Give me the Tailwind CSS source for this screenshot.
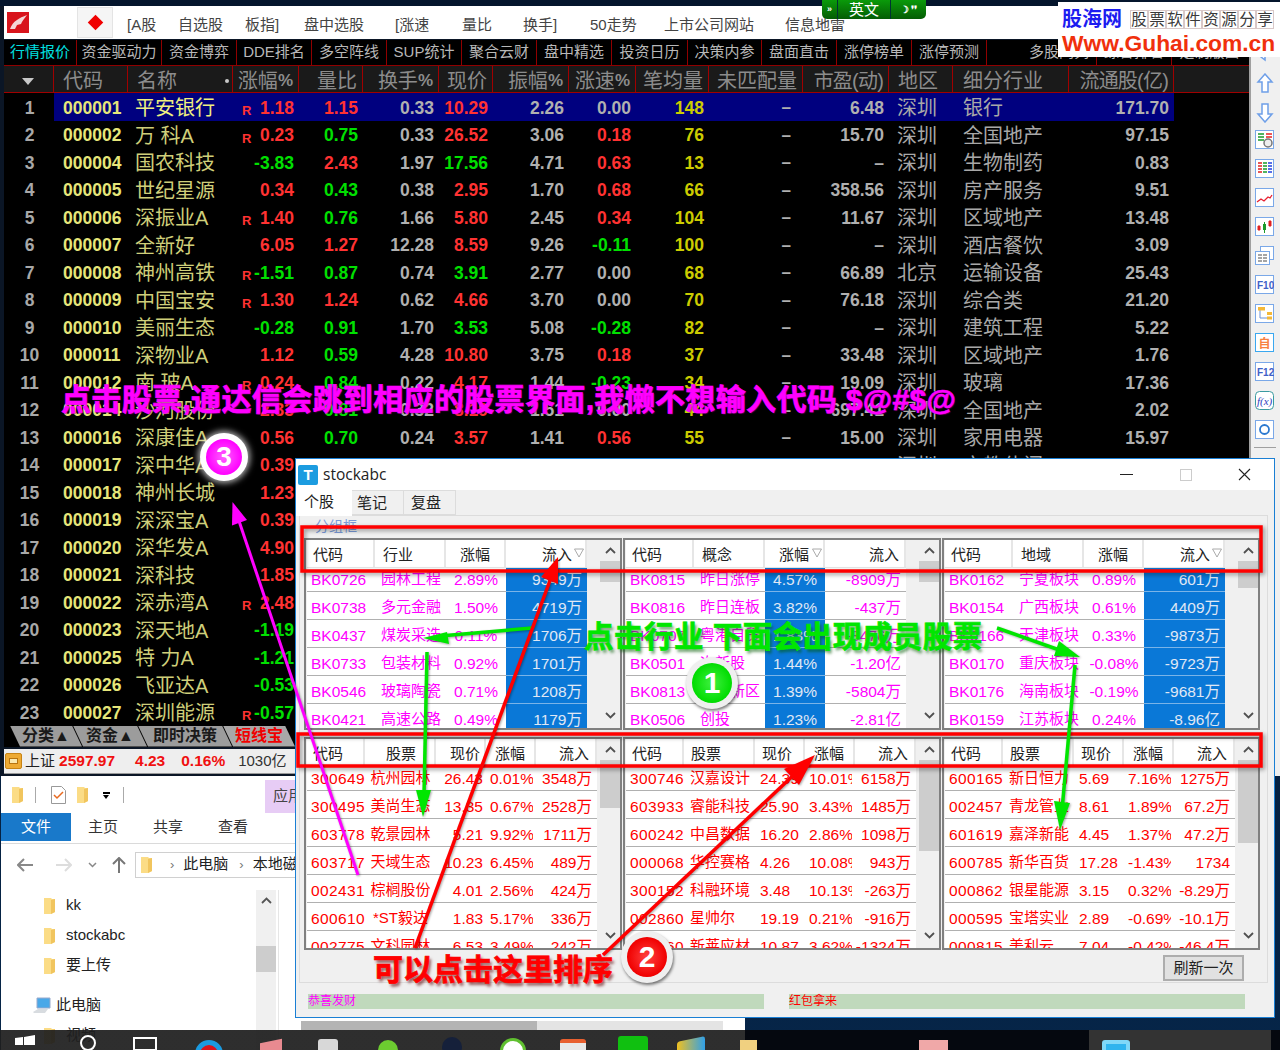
<!DOCTYPE html>
<html>
<head>
    <title>stockabc</title>
    <meta charset="utf-8">
    <script src="https://cdn.jsdelivr.net/npm/@tailwindcss/browser@4"></script>
</head>
<body class="bg-[#04152c] [font-family:'Liberation_Sans','Noto_Sans_CJK_SC',sans-serif]">
<svg class="hidden">
    <symbol id="folder" viewBox="0 0 12 17"><path d="M0 1h7l1 1h3v13l-4 2H0z" fill="#fbdc86"/><path d="M7 3l4-1v13l-4 2z" fill="#f1c55e"/></symbol>
</svg>

<div class="relative w-[1280px] h-[1050px] overflow-hidden bg-[linear-gradient(180deg,#04152c,#062548)]">

    <!-- tdx main window -->
    <div class="absolute left-0 top-[6px] w-[1280px] h-[770px] bg-[#0b1626] flex flex-col">
        <div class="ml-[4px] h-[33px] bg-white flex items-center text-[15px] text-[#444] shrink-0 relative">
            <svg class="ml-[3px] w-[22px] h-[21px]" viewBox="0 0 22 21"><rect width="22" height="21" fill="#d8141c"/><path d="M3 17C6 9 12 6 20 3c-3 4-5 6-6 9l-4 1-2 4z" fill="#f4d6d6"/></svg>
            <div class="ml-[48px] w-[36px] h-[31px] bg-[#f5f5f5] border border-[#e4e4e4] flex items-center justify-center">
                <div class="w-[11px] h-[11px] rotate-45 bg-[#f00000]"></div>
            </div>
            <div class="flex pt-[6px]">
                <span class="ml-[14px] w-[51px]">[A股</span>
                <span class="w-[67px]">自选股</span>
                <span class="w-[59px]">板指]</span>
                <span class="w-[91px]">盘中选股</span>
                <span class="w-[67px]">[涨速</span>
                <span class="w-[61px]">量比</span>
                <span class="w-[67px]">换手]</span>
                <span class="w-[74px]">50走势</span>
                <span class="w-[121px]">上市公司网站</span>
                <span>信息地雷</span>
            </div>
        </div>
        <div class="flex flex-1 min-h-0 pt-[1px]">
            <div class="ml-[4px] w-[1245px] flex flex-col">
                <div class="h-[26px] bg-black flex items-center text-[15px] text-[#b8b8b8] border-b border-[#900000] shrink-0">
                    <span class="w-[73px] h-full flex items-center justify-center text-[#00e0e0] border-r border-[#900000]">行情报价</span>
                    <span class="w-[85px] h-full flex items-center justify-center border-r border-[#900000]">资金驱动力</span>
                    <span class="w-[75px] h-full flex items-center justify-center border-r border-[#900000]">资金博弈</span>
                    <span class="w-[75px] h-full flex items-center justify-center border-r border-[#900000]">DDE排名</span>
                    <span class="w-[75px] h-full flex items-center justify-center border-r border-[#900000]">多空阵线</span>
                    <span class="w-[75px] h-full flex items-center justify-center border-r border-[#900000]">SUP统计</span>
                    <span class="w-[75px] h-full flex items-center justify-center border-r border-[#900000]">聚合云财</span>
                    <span class="w-[75px] h-full flex items-center justify-center border-r border-[#900000]">盘中精选</span>
                    <span class="w-[76px] h-full flex items-center justify-center border-r border-[#900000]">投资日历</span>
                    <span class="w-[74px] h-full flex items-center justify-center border-r border-[#900000]">决策内参</span>
                    <span class="w-[75px] h-full flex items-center justify-center border-r border-[#900000]">盘面直击</span>
                    <span class="w-[75px] h-full flex items-center justify-center border-r border-[#900000]">涨停榜单</span>
                    <span class="w-[75px] h-full flex items-center justify-center border-r border-[#900000]">涨停预测</span>
                    <span class="w-[110px] h-full flex items-center justify-end pr-[7px] border-r border-[#900000]">多股同列</span>
                    <span class="w-[75px] h-full flex items-center justify-center border-r border-[#900000]">综合排名</span>
                    <span class="w-[75px] h-full flex items-center justify-center">定制版面</span>
                </div>
                <div class="h-[27px] bg-[#1a1a1a] border-b border-[#a00000] grid grid-cols-[50px_74px_105px_66px_64px_76px_54px_76px_67px_73px_94px_86px_64px_116px_105px_75px] text-[20px] text-[#8c8c8c] shrink-0">
                    <div class="border-r border-[#a00000] flex items-center justify-center pr-[1px]"><span class="w-0 h-0 border-x-[6px] border-x-transparent border-t-[7px] border-t-[#c8c8c8]"></span></div>
                    <div class="border-r border-[#a00000] flex items-center pl-[9px]">代码</div>
                    <div class="border-r border-[#a00000] flex items-center justify-between pl-[9px] pr-[3px]"><span>名称</span><span class="w-[4px] h-[4px] rounded-full bg-[#c8c8c8]"></span></div>
                    <div class="border-r border-[#a00000] flex items-center justify-end pr-[5px]">涨幅<b class="text-[17px]">%</b></div>
                    <div class="border-r border-[#a00000] flex items-center justify-end pr-[5px]">量比</div>
                    <div class="border-r border-[#a00000] flex items-center justify-end pr-[5px]">换手<b class="text-[17px]">%</b></div>
                    <div class="border-r border-[#a00000] flex items-center justify-end pr-[5px]">现价</div>
                    <div class="border-r border-[#a00000] flex items-center justify-end pr-[5px]">振幅<b class="text-[17px]">%</b></div>
                    <div class="border-r border-[#a00000] flex items-center justify-end pr-[5px]">涨速<b class="text-[17px]">%</b></div>
                    <div class="border-r border-[#a00000] flex items-center justify-end pr-[5px]">笔均量</div>
                    <div class="border-r border-[#a00000] flex items-center justify-end pr-[5px]">未匹配量</div>
                    <div class="border-r border-[#a00000] flex items-center justify-end pr-[5px] whitespace-nowrap tracking-[-.8px]">市盈(动)</div>
                    <div class="border-r border-[#a00000] flex items-center pl-[9px]">地区</div>
                    <div class="border-r border-[#a00000] flex items-center pl-[10px]">细分行业</div>
                    <div class="border-r border-[#a00000] flex items-center justify-end pr-[5px] whitespace-nowrap tracking-[-.8px]">流通股(亿)</div>
                    <div></div>
                </div>
                <div id="quoteRows" class="bg-black shrink-0"></div>
                <div class="h-[21px] bg-black flex pl-[6px] text-[16px] font-bold text-[#1a1a1a] shrink-0">
                    <div class="w-[72px] h-full bg-[#9c9c9c] [clip-path:polygon(0_0,calc(100%-10px)_0,100%_100%,10px_100%)] flex items-center justify-center">分类▲</div>
                    <div class="w-[74px] h-full -ml-[9px] bg-[#9c9c9c] [clip-path:polygon(0_0,calc(100%-10px)_0,100%_100%,10px_100%)] flex items-center justify-center">资金▲</div>
                    <div class="w-[94px] h-full -ml-[9px] bg-[#9c9c9c] [clip-path:polygon(0_0,calc(100%-10px)_0,100%_100%,10px_100%)] flex items-center justify-center">即时决策</div>
                    <div class="w-[72px] h-full -ml-[9px] bg-[#a8a8a8] [clip-path:polygon(0_0,calc(100%-10px)_0,100%_100%,10px_100%)] flex items-center justify-center text-[#f00000]">短线宝</div>
                </div>
                <div class="mt-[2px] h-[25px] bg-[#eeeeee] flex items-center shrink-0 border-b border-[#999] pt-[1px]">
                    <div class="ml-[1px] w-[17px] h-[16px] rounded-[2px] bg-[#eeaa33] border border-[#c88414] flex items-center justify-center"><span class="w-[9px] h-[6px] bg-[#fbe9b0] border border-[#b87410]"></span></div>
                    <span class="ml-[3px] text-[15px] text-[#222]">上证</span>
                    <b class="ml-[4px] text-[15.5px] text-[#f01010]">2597.97</b>
                    <b class="ml-[20px] text-[15.5px] text-[#f01010]">4.23</b>
                    <b class="ml-[16px] text-[15.5px] text-[#f01010]">0.16%</b>
                    <span class="ml-[13px] text-[15px] text-[#333]">1030亿</span>
                </div>
            </div>
            <div class="w-[31px] bg-[#f0f0f0] border-l-2 border-[#a0a0a0] flex flex-col items-center gap-[10px] pt-[3px] pr-[2px]">
                <svg class="w-[20px] h-[20px] shrink-0" viewBox="0 0 20 20"><path d="M1 10L10 3v4h9v6h-9v4z" fill="#fff" stroke="#6e9fe8" stroke-width="1.5"/></svg>
                <svg class="w-[20px] h-[20px] shrink-0" viewBox="0 0 20 20"><path d="M10 1l7 8h-4v10H7V9H3z" fill="#fff" stroke="#6e9fe8" stroke-width="1.5"/></svg>
                <svg class="w-[20px] h-[20px] shrink-0" viewBox="0 0 20 20"><path d="M10 19l7-8h-4V1H7v10H3z" fill="#fff" stroke="#6e9fe8" stroke-width="1.5"/></svg>
                <svg class="w-[19px] h-[19px] shrink-0 -mt-[3px]" viewBox="0 0 19 19"><rect x=".5" y=".5" width="18" height="18" fill="#fff" stroke="#7aa8e8"/><path d="M3 4h6M3 7h6M3 10h6" stroke="#1a9a2a" stroke-width="1.5"/><path d="M11 4h6M11 7h6" stroke="#e82020" stroke-width="1.5"/><circle cx="13" cy="13" r="4" fill="#eee" stroke="#777" stroke-width="1.5"/></svg>
                <svg class="w-[19px] h-[19px] shrink-0" viewBox="0 0 19 19"><rect x=".5" y=".5" width="18" height="18" fill="#fff" stroke="#7aa8e8"/><path d="M3 4h4M3 7h4M3 10h4M3 13h4" stroke="#e02020" stroke-width="1.5"/><path d="M8 4h4M8 7h4M8 10h4M8 13h4" stroke="#1a9a2a" stroke-width="1.5"/><path d="M13 4h4M13 7h4M13 10h4M13 13h4" stroke="#2040e0" stroke-width="1.5"/></svg>
                <svg class="w-[19px] h-[19px] shrink-0" viewBox="0 0 19 19"><rect x=".5" y=".5" width="18" height="18" fill="#fff" stroke="#7aa8e8"/><path d="M2 14l4-3 3 2 4-4 2 1 2-3" fill="none" stroke="#e82030" stroke-width="1.3"/></svg>
                <svg class="w-[19px] h-[19px] shrink-0" viewBox="0 0 19 19"><rect x=".5" y=".5" width="18" height="18" fill="#fff" stroke="#7aa8e8"/><path d="M4 8v6M15 3v7" stroke="#e02020"/><path d="M9.500 5v11" stroke="#1a9a2a"/><rect x="2.500" y="9" width="3" height="4" fill="#e02020"/><rect x="8" y="7" width="3" height="6" fill="#1a9a2a"/><rect x="13.500" y="4" width="3" height="5" fill="#e02020"/></svg>
                <svg class="w-[19px] h-[19px] shrink-0" viewBox="0 0 19 19"><rect x="5.500" y=".5" width="13" height="13" fill="#fff" stroke="#7aa8e8"/><rect x=".5" y="5.500" width="14" height="13" fill="#fff" stroke="#7aa8e8"/><path d="M3 9h4M3 12h4M3 15h4M8 9h4M8 12h4M8 15h4" stroke="#888" stroke-width="1.5"/></svg>
                <svg class="w-[19px] h-[19px] shrink-0" viewBox="0 0 19 19"><rect x=".5" y=".5" width="18" height="18" fill="#fff" stroke="#7aa8e8"/><text x="2" y="13.500" font-size="10" font-weight="bold" font-family="Liberation Sans" fill="#4060c8">F10</text></svg>
                <svg class="w-[19px] h-[19px] shrink-0" viewBox="0 0 19 19"><rect x=".5" y=".5" width="18" height="18" fill="#fff" stroke="#7aa8e8"/><path d="M5 6v8h7" fill="none" stroke="#6a90d8"/><rect x="3" y="3" width="7" height="3.500" fill="#f4b838"/><rect x="12" y="8" width="5" height="3" fill="#f4b838"/><rect x="12" y="12.500" width="5" height="3" fill="#f4b838"/></svg>
                <svg class="w-[19px] h-[19px] shrink-0" viewBox="0 0 19 19"><rect x=".5" y=".5" width="18" height="18" fill="#fff" stroke="#3aa8f0"/><text x="3.500" y="14.500" font-size="12" font-weight="bold" font-family="Noto Sans CJK SC" fill="#f88040">自</text></svg>
                <svg class="w-[19px] h-[19px] shrink-0" viewBox="0 0 19 19"><rect x=".5" y=".5" width="18" height="18" fill="#fff" stroke="#7aa8e8"/><text x="2" y="13.500" font-size="10" font-weight="bold" font-family="Liberation Sans" fill="#4060c8">F12</text></svg>
                <svg class="w-[19px] h-[19px] shrink-0" viewBox="0 0 19 19"><rect x=".5" y=".5" width="18" height="18" rx="4" fill="#fff" stroke="#3a9aa0"/><text x="2" y="14" font-size="11" font-style="italic" font-family="Liberation Serif" fill="#3040c0">f(x)</text></svg>
                <svg class="w-[19px] h-[19px] shrink-0" viewBox="0 0 19 19"><rect x=".5" y=".5" width="18" height="18" fill="#fff" stroke="#7aa8e8"/><circle cx="9.500" cy="9.500" r="4.500" fill="none" stroke="#2a78d0" stroke-width="1.800"/></svg>
                <div class="w-[22px] h-[1px] bg-[#a0a0a0] mt-[-2px]"></div>
            </div>
        </div>
    </div>

    <!-- ime bar -->
    <div class="absolute left-[822px] top-0 w-[104px] h-[19px] rounded-b-[5px] bg-[linear-gradient(180deg,#0a9a0a,#045c04)] flex items-center text-white">
        <span class="w-[16px] text-center text-[9px] font-bold border-r border-[#033] leading-[19px]">»</span>
        <span class="w-[53px] text-center text-[15px] border-r border-[#033] leading-[19px]">英文</span>
        <span class="flex-1 text-center text-[10px] font-bold">☽ ❜❜</span>
    </div>

    <!-- guhai logo -->
    <div class="absolute left-[1058px] top-[2px] w-[222px] h-[55px] bg-white pl-[4px] pt-[5px]">
        <div class="flex items-center h-[24px]">
            <b class="text-[20px] leading-none text-[#1c1cf0] w-[68px]">股海网</b>
            <div class="flex text-[15.500px] leading-[18px] text-[#3a3a3a] [font-family:'Liberation_Serif','Noto_Sans_CJK_SC',serif]">
                <span class="w-[18px] h-[19px] border border-[#d8c8c8] text-center">股</span><span class="w-[18px] h-[19px] border border-[#d8c8c8] text-center">票</span><span class="w-[18px] h-[19px] border border-[#d8c8c8] text-center">软</span><span class="w-[18px] h-[19px] border border-[#d8c8c8] text-center">件</span><span class="w-[18px] h-[19px] border border-[#d8c8c8] text-center">资</span><span class="w-[18px] h-[19px] border border-[#d8c8c8] text-center">源</span><span class="w-[18px] h-[19px] border border-[#d8c8c8] text-center">分</span><span class="w-[18px] h-[19px] border border-[#d8c8c8] text-center">享</span>
            </div>
        </div>
        <b class="block text-[22.800px] leading-[24px] text-[#f0300c] whitespace-nowrap">Www.Guhai.com.cn</b>
    </div>

    <!-- explorer -->
    <div class="absolute left-[1px] top-[776px] w-[744px] h-[274px] bg-white overflow-hidden">
        <div class="h-[37px] flex items-center relative">
            <svg class="ml-[11px] w-[12px] h-[17px]"><use href="#folder"/></svg>
            <span class="ml-[11px] w-[1px] h-[16px] bg-[#aaa]"></span>
            <svg class="ml-[15px] w-[15px] h-[18px]" viewBox="0 0 15 18"><path d="M.5.5h10l4 4v13H.5z" fill="#fff" stroke="#999"/><path d="M3 9l3 3 6-6" fill="none" stroke="#e86a20" stroke-width="1.500"/></svg>
            <svg class="ml-[11px] w-[12px] h-[17px]"><use href="#folder"/></svg>
            <span class="ml-[14px] w-[7px] h-[5px] border-t-2 border-black relative after:content-[''] after:absolute after:left-0 after:top-[1px] after:border-x-[3.5px] after:border-x-transparent after:border-t-[4px] after:border-t-black"></span>
            <span class="ml-[13px] w-[1px] h-[16px] bg-[#aaa]"></span>
            <span class="ml-[141px] self-end h-[33px] w-[110px] bg-[#e7ccf5] text-[15px] text-[#444] pl-[8px] flex items-center whitespace-nowrap">应用程序工具</span>
        </div>
        <div class="h-[31px] border-b border-[#dadada] flex text-[15px] text-[#333]">
            <span class="w-[70px] h-[28px] bg-[#1979ca] text-white flex items-center justify-center">文件</span>
            <span class="ml-[17px] w-[30px] h-[28px] flex items-center">主页</span>
            <span class="ml-[35px] w-[30px] h-[28px] flex items-center">共享</span>
            <span class="ml-[35px] w-[30px] h-[28px] flex items-center">查看</span>
        </div>
        <div class="h-[36px] flex items-center pt-[5px]">
            <svg class="ml-[16px] w-[16px] h-[14px]" viewBox="0 0 16 14"><path d="M7 1L1 7l6 6M1 7h15" fill="none" stroke="#888" stroke-width="2"/></svg>
            <svg class="ml-[23px] w-[16px] h-[14px]" viewBox="0 0 16 14"><path d="M9 1l6 6-6 6M15 7H0" fill="none" stroke="#ddd" stroke-width="2"/></svg>
            <svg class="ml-[16px] w-[9px] h-[6px]" viewBox="0 0 9 6"><path d="M1 1l3.500 3.500L8 1" fill="none" stroke="#888" stroke-width="1.500"/></svg>
            <svg class="ml-[15px] w-[14px] h-[16px]" viewBox="0 0 14 16"><path d="M1 7l6-6 6 6M7 1v15" fill="none" stroke="#777" stroke-width="2"/></svg>
            <div class="ml-[9px] w-[560px] h-[26px] border border-[#d0d0d0] flex items-center text-[15px] text-[#222]">
                <svg class="ml-[5px] w-[12px] h-[17px]"><use href="#folder"/></svg>
                <span class="ml-[17px] text-[#777] text-[13px]">›</span>
                <span class="ml-[9px]">此电脑</span>
                <span class="ml-[11px] text-[#777] text-[13px]">›</span>
                <span class="ml-[9px]">本地磁盘 (D:)</span>
            </div>
        </div>
        <div class="flex h-[170px] mt-[10px]">
            <div class="w-[255px] text-[15px] text-[#222] relative">
                <div class="h-[30px] flex items-center pl-[43px]"><svg class="w-[12px] h-[17px]"><use href="#folder"/></svg><span class="ml-[10px]">kk</span></div>
                <div class="h-[30px] flex items-center pl-[43px]"><svg class="w-[12px] h-[17px]"><use href="#folder"/></svg><span class="ml-[10px]">stockabc</span></div>
                <div class="h-[30px] flex items-center pl-[43px]"><svg class="w-[12px] h-[17px]"><use href="#folder"/></svg><span class="ml-[10px]">要上传</span></div>
                <div class="h-[10px]"></div>
                <div class="h-[30px] flex items-center pl-[31px]"><svg class="w-[20px] h-[17px]" viewBox="0 0 20 17"><path d="M5 1h13v10H5z" fill="#4aa8e8" stroke="#9ac" /><path d="M1 15l5-3h10l-3 4H2z" fill="#d8dce0"/></svg><span class="ml-[4px]">此电脑</span></div>
                <div class="h-[30px] flex items-center pl-[43px]"><svg class="w-[12px] h-[17px]"><use href="#folder"/></svg><span class="ml-[10px]">视频</span></div>
            </div>
            <div class="w-[20px] bg-[#f0f0f0] h-[161px] flex flex-col items-center">
                <svg class="mt-[7px] w-[11px] h-[7px]" viewBox="0 0 11 7"><path d="M1 6l4.500-4.500L10 6" fill="none" stroke="#555" stroke-width="1.800"/></svg>
                <div class="mt-[42px] w-full h-[26px] bg-[#cdcdcd]"></div>
            </div>
            <div class="ml-[2px] w-[1px] bg-[#e6e6e6]"></div>
        </div>
        <div class="absolute left-[300px] top-[245px] w-[422px] h-[9px] bg-[#e4e4e4]"><div class="w-[236px] h-full bg-[#b4b4b4]"></div></div>
    </div>

    <!-- stockabc window -->
    <div class="absolute left-[295px] top-[458px] w-[980px] h-[560px] border border-[#1a7fd4] bg-[#f0f0f0] flex flex-col">
        <div class="h-[31px] bg-white flex items-center shrink-0 relative">
            <div class="ml-[2px] w-[20px] h-[20px] rounded-[2px] bg-[#1c9ce0] flex items-center justify-center text-white font-bold text-[15px] leading-none">T</div>
            <span class="ml-[5px] text-[15.500px] text-[#222] [font-family:'Open_Sans',sans-serif]">stockabc</span>
            <div class="ml-auto mr-[3px] flex items-center">
                <span class="w-[13px] h-[1px] bg-[#222]"></span>
                <span class="ml-[47px] w-[12px] h-[12px] border border-[#ccc]"></span>
                <svg class="ml-[46px] mr-[20px] w-[13px] h-[13px]" viewBox="0 0 13 13"><path d="M1 1l11 11M12 1L1 12" stroke="#222" stroke-width="1.100"/></svg>
            </div>
        </div>
        <div class="h-[25px] flex text-[15px] text-[#222] shrink-0 relative z-10">
            <span class="w-[56px] h-[26px] bg-white flex items-center pl-[8px] pb-[2px]">个股</span>
            <span class="w-[52px] h-[25px] bg-[#f0f0f0] border border-l-0 border-[#dcdcdc] flex items-center pl-[5px] pt-[1px]">笔记</span>
            <span class="w-[52px] h-[25px] bg-[#f0f0f0] border border-l-0 border-[#dcdcdc] flex items-center pl-[7px] pt-[1px]">复盘</span>
        </div>
        <div class="relative ml-[3px] w-[969px] h-[468px] border border-[#dcdcdc] pl-[4px] pt-[22px] shrink-0">
            <span class="absolute left-[15px] top-0 text-[14px] text-[#7a9ad8]">分组框</span>
            <div id="topPanels" class="grid grid-cols-[318px_318px_318px] gap-x-[1px]"></div>
            <div id="bottomPanels" class="mt-[7px] grid grid-cols-[318px_318px_318px] gap-x-[1px]"></div>
            <div class="mt-[5px] flex justify-end pr-[23px]">
                <button class="w-[81px] h-[26px] bg-[#e1e1e1] border-2 border-[#adadad] text-[15px] text-[#222] flex items-center justify-center">刷新一次</button>
            </div>
        </div>
        <div class="mt-[11px] ml-[12px] flex gap-[25px]">
            <div class="w-[456px] h-[15px] bg-[#c0d9bc] text-[12px] leading-[15px] text-[#ff00ff]">恭喜发财</div>
            <div class="w-[456px] h-[15px] bg-[#c0d9bc] text-[12px] leading-[15px] text-[#ff0000]">红包拿来</div>
        </div>
    </div>

    <!-- taskbar -->
    <div class="absolute left-0 top-[1030px] w-[1280px] h-[20px] overflow-hidden flex items-start bg-[linear-gradient(90deg,rgba(30,30,30,.93)_745px,#05080f_745px)]">
        <svg class="ml-[15px] mt-[5px] w-[20px] h-[20px] shrink-0" viewBox="0 0 20 20"><path d="M0 3l8-1v8H0zM9 2l11-2v10H9z" fill="#fff"/></svg>
        <div class="ml-[45px] mt-[5px] w-[16px] h-[16px] rounded-full border-2 border-white shrink-0"></div>
        <div class="ml-[37px] mt-[7px] w-[24px] h-[14px] border-2 border-white shrink-0"></div>
        <div class="ml-[38px] mt-[10px] w-[28px] h-[28px] rounded-full border-[5px] border-[#1a9ae0] bg-[#d8141c] shrink-0"></div>
        <div class="ml-[37px] mt-[11px] w-[22px] h-[14px] -skew-y-12 bg-[#e88a90] shrink-0"></div>
        <div class="ml-[36px] mt-[9px] w-[20px] h-[18px] rounded-t-[3px] bg-[#d8d8d8] shrink-0"></div>
        <div class="ml-[40px] mt-[10px] w-[20px] h-[20px] rounded-full bg-[#6ccc30] shrink-0"></div>
        <div class="ml-[44px] mt-[7px] w-[20px] h-[20px] rounded-full bg-[#15203a] shrink-0"></div>
        <div class="ml-[38px] mt-[8px] w-[26px] h-[26px] rounded-full border-[3px] border-[#60c030] bg-white shrink-0"></div>
        <div class="ml-[34px] mt-[9px] w-[26px] h-[20px] rounded-t-[3px] bg-[#e8e8e8] border-t-[4px] border-[#e86030] shrink-0"></div>
        <div class="ml-[32px] mt-[6px] w-[30px] h-[24px] rounded-t-[3px] bg-[#10c010] shrink-0"></div>
        <div class="ml-[29px] mt-[9px] w-[28px] h-[22px] rounded-t-[3px] -skew-y-12 bg-[linear-gradient(90deg,#f0c020,#30a0e8)] shrink-0"></div>
        <div class="ml-[35px] mt-[10px] w-[17px] h-[20px] bg-[#f0d080] shrink-0"></div>
        <div class="ml-[162px] mt-[10px] w-[29px] h-[20px] bg-[#f0a8a8] shrink-0"></div>
        <div class="ml-[2px] mt-[17px] text-[15px] text-[#ddd] whitespace-nowrap shrink-0 w-[139px]">通达信金融终端</div>
        <div class="w-[182px] h-[20px] bg-[#333333] shrink-0 flex items-start pl-[13px]">
            <div class="mt-[10px] w-[28px] h-[20px] rounded-t-[3px] bg-[#30b4ee] border-[4px] border-[#80d8f8]"></div>
            <span class="ml-[12px] mt-[17px] text-[15px] text-[#ddd]">stockabc</span>
        </div>
    </div>

    <!-- annotations -->
    <svg class="absolute inset-0 w-[1280px] h-[1050px] pointer-events-none" viewBox="0 0 1280 1050">
        <g class="[filter:drop-shadow(2px_2px_2px_rgba(0,0,0,.4))]" fill="none" stroke="#ff0000" stroke-width="3.500">
            <rect x="302" y="527" width="959" height="44"/>
            <rect x="298" y="734" width="963" height="32"/>
        </g>
        <g class="[filter:drop-shadow(1px_1px_1px_rgba(0,0,0,.35))]">
            <path d="M532 628L440 636" stroke="#00e600" stroke-width="3.500"/>
            <polygon points="423,638 449,644 447,632" fill="#00e600"/>
            <path d="M427 652L424 795" stroke="#00e600" stroke-width="3.500"/>
            <polygon points="423,817 431,790 416,790" fill="#00e600"/>
            <path d="M997 628L1065 652" stroke="#00e600" stroke-width="3.500"/>
            <polygon points="1080,657 1054,656 1059,641" fill="#00e600"/>
            <path d="M1075 665L1062 810" stroke="#00e600" stroke-width="3.500"/>
            <polygon points="1060,830 1070,803 1054,801" fill="#00e600"/>
            <path d="M415 948L552 575" stroke="#ff0000" stroke-width="3.500"/>
            <polygon points="558,557 558,584 541,577" fill="#ff0000"/>
            <path d="M603 955L800 769" stroke="#ff0000" stroke-width="3.500"/>
            <polygon points="815,755 799,785 784,769" fill="#ff0000"/>
            <path d="M358 875L238 518" stroke="#ff00ff" stroke-width="3"/>
            <polygon points="232.500,502 247,520 232,525.500" fill="#ff00ff"/>
        </g>
    </svg>
    <div class="absolute left-[61px] top-[384px] text-[30px] leading-[32px] font-bold tracking-[.35px] text-[#ff00ff] whitespace-nowrap [-webkit-text-stroke:.7px_#ff00ff] [text-shadow:1px_1px_1px_rgba(120,0,120,.6)]">点击股票,通达信会跳到相应的股票界面,我懒不想输入代码 $@#$@</div>
    <div class="absolute left-[584px] top-[621px] text-[29.500px] leading-[32px] font-bold tracking-[.5px] text-[#00e600] whitespace-nowrap [-webkit-text-stroke:.7px_#00e600] [text-shadow:2px_3px_3px_rgba(0,90,0,.55)]">点击行业 下面会出现成员股票</div>
    <div class="absolute left-[373px] top-[954px] text-[30px] leading-[32px] font-bold text-[#ff0000] whitespace-nowrap [-webkit-text-stroke:.7px_#ff0000] [text-shadow:2px_3px_3px_rgba(90,0,0,.6)]">可以点击这里排序</div>
    <div class="absolute left-[200px] top-[433px] w-[48px] h-[48px] rounded-full bg-white shadow-[0_0_6px_2px_rgba(255,255,255,.7)] flex items-center justify-center">
        <div class="w-[36px] h-[36px] rounded-full bg-[radial-gradient(circle,#ff60ff,#ff00ff_70%)] text-white text-[28px] font-bold leading-none flex items-center justify-center">3</div>
    </div>
    <div class="absolute left-[686px] top-[657px] w-[52px] h-[52px] rounded-full bg-[#efefef] shadow-[1px_2px_3px_rgba(0,0,0,.5)] flex items-center justify-center">
        <div class="w-[40px] h-[40px] rounded-full bg-[radial-gradient(circle,#40f040,#00dc00_70%)] text-white text-[30px] font-bold leading-none flex items-center justify-center">1</div>
    </div>
    <div class="absolute left-[621px] top-[931px] w-[52px] h-[52px] rounded-full bg-[#efefef] shadow-[1px_2px_3px_rgba(0,0,0,.5)] flex items-center justify-center">
        <div class="w-[40px] h-[40px] rounded-full bg-[radial-gradient(circle,#ff4040,#f00000_70%)] text-white text-[30px] font-bold leading-none flex items-center justify-center">2</div>
    </div>
</div>

<script>
    const RED = 'text-[#ff3232]';
    const GREEN = 'text-[#00e000]';
    const GREY = 'text-[#b0b0b0]';
    const NUM = 'flex items-center justify-end pr-[5px] font-bold text-[17.5px]';
    const CJK = 'flex items-center text-[20px] text-[#a8a8a8] whitespace-nowrap';

    // no, code, name, R flag, chg, volRatio, turnover, price, amp, speed, avgVol, pe, area, industry, float
    const quotes = [
        [1,'000001','平安银行',1,'1.18','1.15','0.33','10.29','2.26','0.00','148','6.48','深圳','银行','171.70'],
        [2,'000002','万 科A',1,'0.23','0.75','0.33','26.52','3.06','0.18','76','15.70','深圳','全国地产','97.15'],
        [3,'000004','国农科技',0,'-3.83','2.43','1.97','17.56','4.71','0.63','13','–','深圳','生物制药','0.83'],
        [4,'000005','世纪星源',0,'0.34','0.43','0.38','2.95','1.70','0.68','66','358.56','深圳','房产服务','9.51'],
        [5,'000006','深振业A',1,'1.40','0.76','1.66','5.80','2.45','0.34','104','11.67','深圳','区域地产','13.48'],
        [6,'000007','全新好',0,'6.05','1.27','12.28','8.59','9.26','-0.11','100','–','深圳','酒店餐饮','3.09'],
        [7,'000008','神州高铁',1,'-1.51','0.87','0.74','3.91','2.77','0.00','68','66.89','北京','运输设备','25.43'],
        [8,'000009','中国宝安',1,'1.30','1.24','0.62','4.66','3.70','0.00','70','76.18','深圳','综合类','21.20'],
        [9,'000010','美丽生态',0,'-0.28','0.91','1.70','3.53','5.08','-0.28','82','–','深圳','建筑工程','5.22'],
        [10,'000011','深物业A',0,'1.12','0.59','4.28','10.80','3.75','0.18','37','33.48','深圳','区域地产','1.76'],
        [11,'000012','南 玻A',1,'0.24','0.84','0.22','4.17','1.44','-0.23','34','19.09','深圳','玻璃','17.36'],
        [12,'000014','沙河股份',0,'2.33','0.81','0.32','8.19','1.51','0.00','44','697.41','深圳','全国地产','2.02'],
        [13,'000016','深康佳A',0,'0.56','0.70','0.24','3.57','1.41','0.56','55','15.00','深圳','家用电器','15.97'],
        [14,'000017','深中华A',0,'0.39','','','','','','','','深圳','文教休闲',''],
        [15,'000018','神州长城',0,'1.23'],
        [16,'000019','深深宝A',0,'0.39'],
        [17,'000020','深华发A',0,'4.90'],
        [18,'000021','深科技',0,'1.85'],
        [19,'000022','深赤湾A',1,'2.48'],
        [20,'000023','深天地A',0,'-1.19'],
        [21,'000025','特 力A',0,'-1.21'],
        [22,'000026','飞亚达A',0,'-0.53'],
        [23,'000027','深圳能源',1,'-0.57'],
    ];

    function signColor(v) {
        return v.startsWith('-') ? GREEN : RED;
    }

    function quoteRow(q) {
        const [no, code, name, flag, chg, vr = '', turn = '', price = '', amp = '', speed = '', avg = '', pe = '', area = '', ind = '', flt = ''] = q;
        const first = no === 1;
        const vrColor = parseFloat(vr) < 1 ? GREEN : RED;
        const speedColor = parseFloat(speed) === 0 ? GREY : signColor(speed);
        return `<div class="h-[27.5px] grid grid-cols-[50px_74px_105px_66px_64px_76px_54px_76px_67px_73px_94px_86px_64px_116px_105px] ${first ? 'bg-[#00007f]' : ''} w-[1170px]">
            <div class="bg-black flex items-center justify-center pl-[1px] font-bold text-[17.5px] text-[#a8a8a8]">${no}</div>
            <div class="flex items-center pl-[9px] font-bold text-[17.5px] text-[#e6e67a]">${code}</div>
            <div class="flex items-center pl-[7px] text-[20px] whitespace-nowrap ${first ? 'text-[#f0f080]' : 'text-[#cfcf7a]'}">${name}</div>
            <div class="flex items-center pl-[9px] pr-[5px] font-bold text-[17.5px] ${signColor(chg)}"><span class="text-[13px] mt-[6px] text-[#ff3232] ${flag ? '' : 'hidden'}">R</span><span class="ml-auto">${chg}</span></div>
            <div class="${NUM} ${vrColor}">${vr}</div>
            <div class="${NUM} ${GREY}">${turn}</div>
            <div class="${NUM} ${signColor(chg)}">${price}</div>
            <div class="${NUM} ${GREY}">${amp}</div>
            <div class="${NUM} ${speedColor}">${speed}</div>
            <div class="${NUM} text-[#cccc00]">${avg}</div>
            <div class="flex items-center justify-end pr-[12px] font-bold text-[17px] ${GREY}">${avg ? '–' : ''}</div>
            <div class="${NUM} ${GREY}">${pe}</div>
            <div class="${CJK} pl-[8px]">${area}</div>
            <div class="${CJK} pl-[10px]">${ind}</div>
            <div class="${NUM} ${GREY}">${flt}</div>
        </div>`;
    }
    document.getElementById('quoteRows').innerHTML = quotes.map(quoteRow).join('');

    const CHEVRON_UP = '<svg class="w-[11px] h-[7px]" viewBox="0 0 11 7"><path d="M1 6l4.500-4.500L10 6" fill="none" stroke="#505050" stroke-width="1.800"/></svg>';
    const CHEVRON_DOWN = '<svg class="w-[11px] h-[7px]" viewBox="0 0 11 7"><path d="M1 1l4.500 4.500L10 1" fill="none" stroke="#505050" stroke-width="1.800"/></svg>';

    function scrollbar(thumb) {
        return `<div class="w-[20px] ml-auto flex flex-col items-center shrink-0">
            <div class="h-[21px] flex items-center justify-center shrink-0">${CHEVRON_UP}</div>
            <div class="w-full bg-[#cdcdcd] shrink-0 ${thumb}"></div>
            <div class="mt-auto h-[25px] flex items-center justify-center shrink-0">${CHEVRON_DOWN}</div>
        </div>`;
    }

    const SORT_MARK = '<svg class="absolute right-[1px] top-[8px] w-[10px] h-[10px]" viewBox="0 0 10 10"><path d="M.5 1h9L5 9z" fill="#fff" stroke="#aaa"/></svg>';
    const HEAD_CELL = 'relative h-full bg-white border-r-2 border-b border-[#e6e6e6] flex items-center whitespace-nowrap pt-[4px]';

    // top panels: sector lists, one column is marked as sorted (blue)
    const topPanels = [
        {label:'行业', sort:'flow', thumb:'h-[21px]', rows:[
            ['BK0726','园林工程','2.89%','9349万'],['BK0738','多元金融','1.50%','4719万'],['BK0437','煤炭采选','0.11%','1706万'],
            ['BK0733','包装材料','0.92%','1701万'],['BK0546','玻璃陶瓷','0.71%','1208万'],['BK0421','高速公路','0.49%','1179万']]},
        {label:'概念', sort:'chg', thumb:'h-[21px]', rows:[
            ['BK0815','昨日涨停','4.57%','-8909万'],['BK0816','昨日连板','3.82%','-437万'],['BK0707','粤港自贸','1.83%','-3476万'],
            ['BK0501','次新股','1.44%','-1.20亿'],['BK0813','雄安新区','1.39%','-5804万'],['BK0506','创投','1.23%','-2.81亿']]},
        {label:'地域', sort:'flow', thumb:'h-[27px]', rows:[
            ['BK0162','宁夏板块','0.89%','601万'],['BK0154','广西板块','0.61%','4409万'],['BK0166','天津板块','0.33%','-9873万'],
            ['BK0170','重庆板块','-0.08%','-9723万'],['BK0176','海南板块','-0.19%','-9681万'],['BK0159','江苏板块','0.24%','-8.96亿']]},
    ];

    function topPanel(p) {
        const chgOn = p.sort === 'chg';
        const flowOn = p.sort === 'flow';
        const rows = p.rows.map(r => `<div class="h-[28px] grid grid-cols-[68px_71px_60px_81px] text-[15.5px] text-[#ff00ff]">
            <div class="bg-white border-b border-[#b0b0b0] flex items-center pt-[4px] pl-[4px]">${r[0]}</div>
            <div class="bg-white border-b border-[#b0b0b0] flex items-center pt-[4px] pl-[6px] text-[15px] whitespace-nowrap">${r[1]}</div>
            <div class="border-b flex items-center justify-center pt-[4px] ${chgOn ? 'bg-[#0a78d7] border-[#7ab4e8] text-[#e0e8f5]' : 'bg-white border-[#b0b0b0]'}">${r[2]}</div>
            <div class="border-b flex items-center justify-end pt-[4px] pr-[5px] ${flowOn ? 'bg-[#0a78d7] border-[#7ab4e8] text-[#e0e8f5]' : 'bg-white border-[#b0b0b0]'}">${r[3]}</div>
        </div>`).join('');
        return `<div class="h-[192px] border-2 border-[#808080] bg-[#f0f0f0] flex pl-[1px] overflow-hidden">
            <div class="w-[280px] shrink-0">
                <div class="h-[24px] grid grid-cols-[68px_71px_60px_81px] text-[15px] text-[#222]">
                    <div class="${HEAD_CELL} pl-[6px]">代码</div>
                    <div class="${HEAD_CELL} pl-[8px]">${p.label}</div>
                    <div class="${HEAD_CELL} justify-center">涨幅${chgOn ? SORT_MARK : ''}</div>
                    <div class="${HEAD_CELL} justify-end ${flowOn ? 'pr-[13px]' : 'pr-[5px]'}">流入${flowOn ? SORT_MARK : ''}</div>
                </div>
                ${rows}
            </div>
            ${scrollbar(p.thumb)}
        </div>`;
    }
    document.getElementById('topPanels').innerHTML = topPanels.map(topPanel).join('');

    // bottom panels: member stocks
    const bottomPanels = [
        {center:true, thumb:'h-[48px]', rows:[
            ['300649','杭州园林','26.43','0.01%','3548万'],['300495','美尚生态','13.35','0.67%','2528万'],['603778','乾景园林','5.21','9.92%','1711万'],
            ['603717','天域生态','10.23','6.45%','489万'],['002431','棕榈股份','4.01','2.56%','424万'],['600610','*ST毅达','1.83','5.17%','336万'],['002775','文科园林','6.53','3.49%','242万']]},
        {center:false, thumb:'h-[91px]', rows:[
            ['300746','汉嘉设计','24.39','10.01%','6158万'],['603933','睿能科技','25.90','3.43%','1485万'],['600242','中昌数据','16.20','2.86%','1098万'],
            ['000068','华控赛格','4.26','10.08%','943万'],['300152','科融环境','3.48','10.13%','-263万'],['002860','星帅尔','19.19','0.21%','-916万'],['300260','新莱应材','10.87','3.62%','-1324万']]},
        {center:false, thumb:'h-[83px]', rows:[
            ['600165','新日恒力','5.69','7.16%','1275万'],['002457','青龙管业','8.61','1.89%','67.2万'],['601619','嘉泽新能','4.45','1.37%','47.2万'],
            ['600785','新华百货','17.28','-1.43%','1734'],['000862','银星能源','3.15','0.32%','-8.29万'],['000595','宝塔实业','2.89','-0.69%','-10.1万'],['000815','美利云','7.04','-0.42%','-46.4万']]},
    ];

    function bottomPanel(p) {
        const rows = p.rows.map(r => `<div class="h-[28px] bg-white border-b border-[#b0b0b0] grid grid-cols-[58px_71px_50px_50px_61px] text-[15.5px] text-[#ff0000]">
            <div class="flex items-center pt-[4px] pl-[4px] tracking-[.4px]">${r[0]}</div>
            <div class="flex items-center pt-[4px] text-[15px] whitespace-nowrap ${p.center ? 'justify-center' : 'pl-[6px]'}">${r[1]}</div>
            <div class="flex items-center pt-[4px] whitespace-nowrap ${p.center ? 'justify-end pr-[3px]' : 'pl-[5px]'}">${r[2]}</div>
            <div class="flex items-center pt-[4px] pl-[4px] mr-[3px] overflow-hidden whitespace-nowrap">${r[3]}</div>
            <div class="flex items-center pt-[4px] justify-end pr-[5px] whitespace-nowrap">${r[4]}</div>
        </div>`).join('');
        return `<div class="h-[213px] border-2 border-[#808080] bg-[#f0f0f0] flex pl-[1px] overflow-hidden">
            <div class="w-[290px] shrink-0 overflow-hidden">
                <div class="h-[24px] grid grid-cols-[58px_71px_50px_50px_61px] text-[15px] text-[#222]">
                    <div class="${HEAD_CELL} pl-[6px]">代码</div>
                    <div class="${HEAD_CELL} ${p.center ? 'justify-center pl-[3px]' : 'pl-[7px]'}">股票</div>
                    <div class="${HEAD_CELL} ${p.center ? 'justify-end pr-[4px]' : 'pl-[7px]'}">现价</div>
                    <div class="${HEAD_CELL} justify-center">涨幅</div>
                    <div class="${HEAD_CELL} justify-end pr-[6px]">流入</div>
                </div>
                ${rows}
            </div>
            ${scrollbar(p.thumb)}
        </div>`;
    }
    document.getElementById('bottomPanels').innerHTML = bottomPanels.map(bottomPanel).join('');
</script>
</body>
</html>
